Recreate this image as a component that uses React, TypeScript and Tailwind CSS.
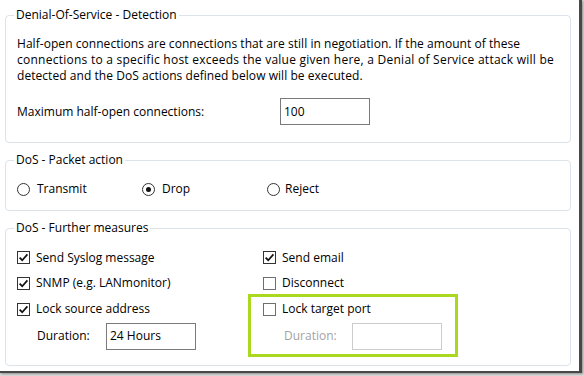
import React from 'react'

const font = { fontFamily: '"Segoe UI", "Open Sans", "Liberation Sans", Arial, sans-serif' }

const Check = ({ checked }: { checked?: boolean }) => (
  <span
    className={`flex h-[13px] w-[13px] shrink-0 items-center justify-center border bg-white ${
      checked ? 'border-[#333333]' : 'border-[#6f6f6f]'
    }`}
  >
    {checked && (
      <svg width="11" height="11" viewBox="0 0 11 11">
        <path d="M1.6 5.6 L4.2 8.2 L9.4 2.4" fill="none" stroke="#111" strokeWidth="1.7" />
      </svg>
    )}
  </span>
)

const Radio = ({ checked }: { checked?: boolean }) => (
  <span className="flex h-[13px] w-[13px] shrink-0 items-center justify-center rounded-full border border-[#333333] bg-white">
    {checked && <span className="h-[5px] w-[5px] rounded-full bg-[#111]" />}
  </span>
)

const CheckRow = ({ label, checked }: { label: string; checked?: boolean }) => (
  <div className="flex items-center gap-[6px]">
    <Check checked={checked} />
    <span>{label}</span>
  </div>
)

const Group = ({
  title,
  className,
  children,
}: {
  title: string
  className?: string
  children: React.ReactNode
}) => (
  <fieldset className={`relative rounded-[4px] border border-[#dce3ea] ${className ?? ''}`}>
    <legend className="ml-[8px] px-[2px] leading-[16px]">{title}</legend>
    {children}
  </fieldset>
)

export default function App() {
  return (
    <div className="h-[376px] w-[584px] bg-[#d9d9d9]" style={font}>
      <div className="flex h-[373px] w-[582px] flex-col gap-[9px] border-r-[3px] border-b-[2px] border-[#474747] bg-white pl-[5px] pr-[8px] pt-[7px] text-[12px] text-black shadow-[1px_1px_2px_rgba(0,0,0,0.35)]">
        <Group title="Denial-Of-Service - Detection" className="h-[136px]">
          <div className="pl-[11px] pt-[13px]">
            <p className="leading-[16px] tracking-[0.05px]">
              Half-open connections are connections that are still in negotiation. If the amount of these
              <br />
              <span className="tracking-[0.25px]">
                connections to a specific host exceeds the value given here, a Denial of Service attack will be
              </span>
              <br />
              detected and the DoS actions defined below will be executed.
            </p>
            <div className="mt-[14px] flex items-center">
              <span className="w-[263px]">Maximum half-open connections:</span>
              <div className="flex h-[27px] w-[90px] items-center border border-[#7a7a7a] pl-[3px]">100</div>
            </div>
          </div>
        </Group>

        <Group title="DoS - Packet action" className="h-[59px]">
          <div className="flex pl-[11px] pt-[13px] leading-[16px]">
            <div className="flex w-[125px] items-center gap-[7px]">
              <Radio />
              <span>Transmit</span>
            </div>
            <div className="flex w-[125px] items-center gap-[7px]">
              <Radio checked />
              <span>Drop</span>
            </div>
            <div className="flex items-center gap-[5px]">
              <Radio />
              <span>Reject</span>
            </div>
          </div>
        </Group>

        <Group title="DoS - Further measures" className="h-[146px]">
          <div className="grid grid-cols-[246px_1fr] grid-rows-[25px_26px_26px_28px] items-center pl-[11px] pt-[9px] leading-[16px]">
            <CheckRow label="Send Syslog message" checked />
            <CheckRow label="Send email" checked />
            <CheckRow label="SNMP (e.g. LANmonitor)" checked />
            <CheckRow label="Disconnect" />
            <CheckRow label="Lock source address" checked />
            <CheckRow label="Lock target port" />
            <div className="flex items-center pl-[20px]">
              <span className="w-[69px]">Duration:</span>
              <div className="flex h-[27px] w-[90px] items-center border border-[#7a7a7a] pl-[3px]">24 Hours</div>
            </div>
            <div className="flex items-center pl-[21px] text-[#a3a3a3]">
              <span className="w-[68px]">Duration:</span>
              <div className="h-[27px] w-[90px] border border-[#cccccc]" />
            </div>
          </div>
          <div className="pointer-events-none absolute left-[242px] top-[58px] h-[63px] w-[210px] border-[3px] border-[#a9d81e]" />
        </Group>
      </div>
    </div>
  )
}
